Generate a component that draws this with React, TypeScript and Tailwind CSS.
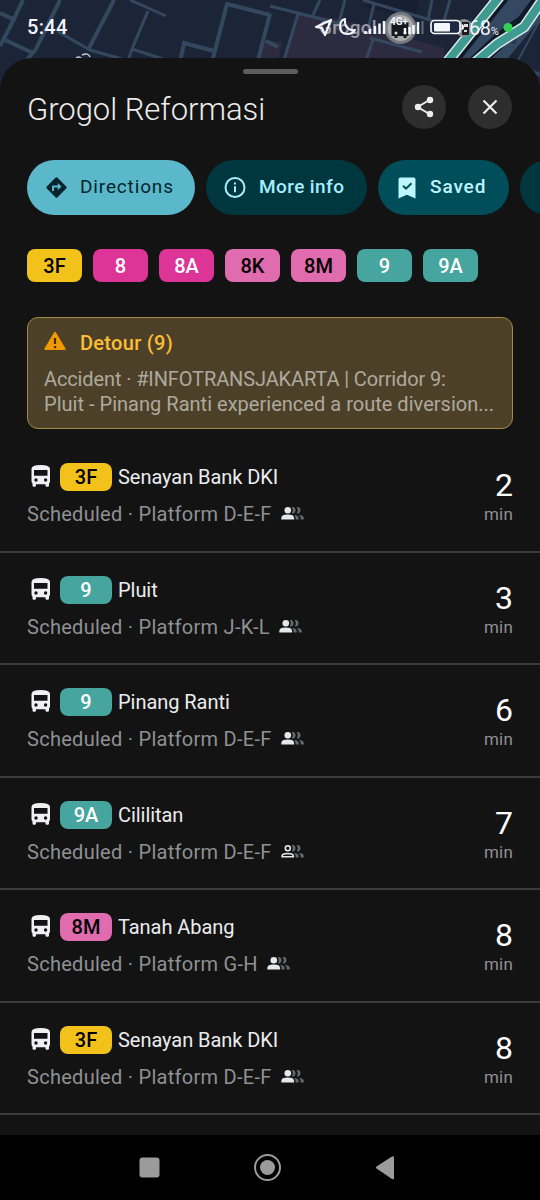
import type { ReactNode } from 'react'

type Route = { name: string; color: string }

const yellow = 'bg-[#f2c21a] text-black'
const magenta = 'bg-[#dd3497] text-white'
const pink = 'bg-[#e06bae] text-black'
const teal = 'bg-[#46a59e] text-white'

const routes: Route[] = [
  { name: '3F', color: yellow },
  { name: '8', color: magenta },
  { name: '8A', color: magenta },
  { name: '8K', color: pink },
  { name: '8M', color: pink },
  { name: '9', color: teal },
  { name: '9A', color: teal },
]

const departures = [
  { route: '3F', color: yellow, to: 'Senayan Bank DKI', platform: 'D-E-F', min: 2, busy: true },
  { route: '9', color: teal, to: 'Pluit', platform: 'J-K-L', min: 3, busy: true },
  { route: '9', color: teal, to: 'Pinang Ranti', platform: 'D-E-F', min: 6, busy: true },
  { route: '9A', color: teal, to: 'Cililitan', platform: 'D-E-F', min: 7, busy: false },
  { route: '8M', color: pink, to: 'Tanah Abang', platform: 'G-H', min: 8, busy: true },
  { route: '3F', color: yellow, to: 'Senayan Bank DKI', platform: 'D-E-F', min: 8, busy: true },
]

function MapBackground() {
  return (
    <svg className="absolute left-0 top-0" width="540" height="100" viewBox="0 0 540 100" fill="none">
      <rect width="540" height="100" fill="#1b2537" />
      <path d="M298 13l42 6 104 29v20H282z M262 40l20 2-4 20h-20z" fill="#2d2b40" />
      <path d="M374 0l46 0-6 20-50-14z" fill="#172033" />
      <path d="M500 0h40v20l-42 50h-54z" fill="#354861" />
      <path d="M540 30v70h-18l-8-30z" fill="#1b2537" />
      <g stroke="#33485f" strokeWidth="3">
        <path d="M0 13l13 6M23 0L11 25 0 46M5 40l28 13M60 0L36 49l-10 12M114 0L88 50" strokeWidth="4" />
        <path d="M57 31l33 19 32 9M130 0l36 16M148 11l-16 38-4 12M132 49l34 11" />
        <path d="M180 62l4-19 30 8M212 62l15-58 43 11M266 41l12 6M270 14l-12 46" strokeWidth="4" />
        <path d="M298 14l-14 46M270 6l75 19M320 0l-7 15M345 0l-8 30M374 4l-6 25M363 0l84 25 22 10M432 0l-4 20M370 38l52 14M366 60l7-20M450 0l-7 24 30 16" />
        <path d="M540 20l-24 44M530 68l10 8M520 82l20-10" strokeWidth="2" />
      </g>
      <path d="M470 22l46 20M450 60l24 8" stroke="#29384e" strokeWidth="5" />
      <path d="M502-4l-56 70M542-2l-18 24-24 18-32 30" stroke="#101a2a" strokeWidth="15" />
      <path d="M500-4l-56 70M544-2l-20 29-27 17-34 29" stroke="#dcebe9" strokeWidth="11" />
      <path d="M500-4l-56 70M544-2l-20 29-27 17-34 29" stroke="#3f9b91" strokeWidth="8" />
      <path d="M76 58c3-2 5-1 6 2M82 55c4-2 7-1 8 2" stroke="#c7cbd1" strokeWidth="1.5" />
    </svg>
  )
}

function StatusBar() {
  return (
    <div className="relative flex h-[58px] items-start justify-between px-[27px] pt-[15px] text-[#f1f4fb]">
      <span className="text-[20px] leading-[25px] font-medium tracking-[0.3px]">5:44</span>
      <div className="relative -mr-[23px] flex h-[25px] w-[226px]">
        {/* station label of the map, showing through under the system icons */}
        <span className="absolute left-[9px] top-[2px] text-[19px] leading-[22px] font-medium tracking-[0.2px] text-[#989ca7]">Grogol</span>
        <svg className="absolute left-0 -top-[6px]" width="204" height="40" viewBox="310 9 204 40" fill="none">
          <circle cx="400.500" cy="28" r="16" fill="#777a80" />
          <circle cx="400.500" cy="28" r="13" fill="#a9abad" />
          <path d="M391.500 22h17v14h-2v2h-3v-2h-6v2h-3v-2h-3z" fill="#161a20" />
          <circle cx="396" cy="33" r="1.500" fill="#ddd" />
          <circle cx="405" cy="33" r="1.500" fill="#ddd" />
          <circle cx="464" cy="28" r="9" fill="#898b8f" />
          <path d="M462 22h7v13h-7z" fill="#1b1b20" />
          <path d="M464 24h4v3h-4zM464 30h3v2h-3z" fill="#ddd" />
          <path d="M316 27l15-7-6 15-3-7z" stroke="#f4f6fc" strokeWidth="2.200" strokeLinejoin="round" />
          <path d="M345 19c-7 1-7 15 2 15 4 0 7-2 8-4-6 1-11-3-10-11z" stroke="#f4f6fc" strokeWidth="2" strokeLinejoin="round" />
          <path d="M365.500 34v-3M370 34v-5M375 34v-8M379.500 34V23.500M384 34V21" stroke="#f4f6fc" strokeWidth="2.500" />
          <path d="M405 34v-6M409.500 34v-7M413.500 34v-9M418 34V22" stroke="#f4f6fc" strokeWidth="2.500" />
          <path d="M422.500 34V21" stroke="#626b7b" strokeWidth="2" />
          <rect x="431" y="20.500" width="29" height="13" rx="3.500" fill="#1d2940" stroke="#f4f6fc" strokeWidth="1.700" />
          <rect x="434" y="23" width="16" height="8.500" rx="1" fill="#f4f6fc" />
          <path d="M462 24.500q2 2.500 0 5" stroke="#f4f6fc" strokeWidth="2" />
          <circle cx="508" cy="27.500" r="4.500" fill="#31d158" />
        </svg>
        <span className="absolute left-[80px] top-[1px] text-[10px] leading-[12px] font-bold">4G+</span>
        <span className="absolute left-[159px] top-[2px] whitespace-nowrap text-[20px] leading-[22px] tracking-[-0.4px]">
          68<span className="text-[11px]">%</span>
        </span>
      </div>
    </div>
  )
}

function RoundButton({ children }: { children: ReactNode }) {
  return <button className="flex size-11 items-center justify-center rounded-full bg-[#2e2e2e] text-[#ededed]">{children}</button>
}

function BusIcon() {
  return (
    <svg width="20" height="24" viewBox="0 0 20 24" className="-mt-[2px] ml-[4px] shrink-0">
      <path
        fill="#f0f0f3"
        fillRule="evenodd"
        d="M0.500 5Q0.500 1 9.700 1T19 5V17.200q0 1.300-1 2.200v2q0 1.400-1.400 1.400h-.7q-1.400 0-1.400-1.400v-1.200H5v1.200q0 1.400-1.400 1.400h-.7q-1.400 0-1.400-1.400v-2q-1-.9-1-2.200zM3 6v5.800h13.500V6zM5 14.300a1.700 1.700 0 100 3.400 1.700 1.700 0 000-3.400zm9.600 0a1.700 1.700 0 100 3.400 1.700 1.700 0 000-3.400z"
      />
    </svg>
  )
}

function CrowdIcon({ busy }: { busy: boolean }) {
  return (
    <svg width="23" height="15" viewBox="0 0 23 15" fill="none" className="-mt-[2px]">
      <circle cx="6.800" cy="4.300" r={busy ? 3.300 : 2.500} fill={busy ? '#e6e7ea' : 'none'} stroke={busy ? 'none' : '#e6e7ea'} strokeWidth="1.600" />
      <path
        d={busy ? 'M.3 13.500V12Q.3 8.600 6.700 8.600T13.100 12v1.500z' : 'M1.100 12.700v-.8Q1.100 9.500 6.700 9.500t5.600 2.400v.8z'}
        fill={busy ? '#e6e7ea' : 'none'}
        stroke={busy ? 'none' : '#e6e7ea'}
        strokeWidth="1.600"
      />
      <path
        fill="#686b6e"
        d="M10.700 1.200q3.400-.8 3.800 3.100-.4 3.900-3.800 3.100 2.200-3.100 0-6.200zM15.700 1.200q3.400-.8 3.800 3.100-.4 3.900-3.800 3.100 2.200-3.100 0-6.200zM13 8.700q4.600.7 4.600 3.300v1.500h-3V12q0-2-1.600-3.300zM17.700 8.700q5 .7 5 3.300v1.500h-3V12q0-2-2-3.300z"
      />
    </svg>
  )
}

function Actions() {
  return (
    <div className="mt-[31px] flex h-[55px] gap-[11px] overflow-hidden pl-[27px] text-[19px] font-medium">
      <button className="flex w-[168px] shrink-0 items-center rounded-full bg-[#5ab8ca] pl-[18px] text-[#04252e]">
        <svg width="23" height="23" viewBox="0 0 23 23" fill="none">
          <rect x="3.900" y="3.900" width="15.200" height="15.200" rx="1.500" transform="rotate(45 11.500 11.500)" fill="#04252e" />
          <path d="M8 15v-4.500h6.500" stroke="#5ab8ca" strokeWidth="1.900" />
          <path d="M12.800 7l3.700 3.500-3.700 3.500z" fill="#5ab8ca" />
        </svg>
        <span className="ml-[12px] font-normal tracking-[0.85px]">Directions</span>
      </button>
      <button className="flex w-[161px] shrink-0 items-center rounded-full bg-[#00363e] pl-[18px] text-[#a6eeff]">
        <svg width="23" height="23" viewBox="0 0 23 23" fill="none" stroke="currentColor" strokeWidth="2">
          <circle cx="11" cy="11.500" r="9.500" />
          <path d="M11 10.300v6M11 6.600v2" />
        </svg>
        <span className="ml-[12px] tracking-[0.4px]">More info</span>
      </button>
      <button className="flex w-[131px] shrink-0 items-center rounded-full bg-[#004e59] pl-[20px] text-[#bff5ff]">
        <svg width="18" height="22" viewBox="0 0 18 22" fill="none">
          <path d="M2.500.5h13q2 0 2 2V21.500l-8.700-3.700L.5 21.500V2.500q0-2 2-2z" fill="currentColor" />
          <path d="M5 8.700l3 3 5.500-5.500" stroke="#004e59" strokeWidth="2" />
        </svg>
        <span className="ml-[14px] tracking-[0.9px]">Saved</span>
      </button>
      <div className="w-[131px] shrink-0 rounded-full bg-[#00363e]" />
    </div>
  )
}

function DetourAlert() {
  return (
    <div className="mx-[27px] mt-[35px] h-[112px] rounded-[11px] border-[1.500px] border-[#a28a43] bg-[#4c4128] px-[16px] pt-[12px]">
      <div className="flex items-center gap-[14px]">
        <svg width="22" height="20" viewBox="0 0 22 20" className="-mt-[5px]">
          <path d="M10 1.500q1-1.500 2 0l9.500 16q.7 1.500-1 1.500h-19q-1.700 0-1-1.500z" fill="#f29900" />
          <path d="M11 7v6M11 15v2.200" stroke="#3b301e" strokeWidth="2.200" />
        </svg>
        <span className="text-[20px] leading-[26px] font-medium tracking-[0.3px] text-[#fdbd34]">Detour (9)</span>
      </div>
      <p className="mt-[11px] whitespace-nowrap text-[20px] leading-[24.500px] text-[#aea99e]">
        <span className="tracking-[-0.12px]">Accident · #INFOTRANSJAKARTA | Corridor 9:</span>
        <br />
        <span className="tracking-[0.02px]">Pluit - Pinang Ranti experienced a route diversion...</span>
      </p>
    </div>
  )
}

export default function App() {
  return (
    <div className="relative flex h-[1200px] w-[540px] flex-col overflow-hidden bg-black font-['Roboto',sans-serif]">
      <MapBackground />
      <StatusBar />

      <main className="relative h-[1077px] overflow-hidden rounded-t-[32px] bg-[#131313]">
        <div className="mx-auto mt-[11px] h-[5px] w-[55px] rounded-full bg-[#5d5d5d]" />

        <header className="mt-[11px] flex h-[44px] items-center pr-[28px] pl-[27px]">
          <h1 className="flex-1 pt-[6px] text-[31px] leading-[40px] font-[350] tracking-[-0.02px] text-[#ececec]">Grogol Reformasi</h1>
          <div className="flex gap-[22px]">
            <RoundButton>
              <svg width="22" height="22" viewBox="0 0 22 22" fill="currentColor">
                <path d="M16.500 4L4.500 11l12 7" fill="none" stroke="currentColor" strokeWidth="1.900" />
                <circle cx="17" cy="4" r="3.200" />
                <circle cx="5" cy="11" r="3.200" />
                <circle cx="17" cy="18" r="3.200" />
              </svg>
            </RoundButton>
            <RoundButton>
              <svg width="16" height="16" viewBox="0 0 16 16" stroke="currentColor" strokeWidth="2.200">
                <path d="M1.500 1.500l13 13M14.500 1.500l-13 13" />
              </svg>
            </RoundButton>
          </div>
        </header>

        <Actions />

        <div className="mt-[34px] flex gap-[11px] pl-[27px]">
          {routes.map((r) => (
            <span key={r.name} className={`flex h-[33px] w-[55px] items-center justify-center rounded-[8px] text-[20px] font-medium ${r.color}`}>
              {r.name}
            </span>
          ))}
        </div>

        <DetourAlert />

        <ul className="mt-[11px]">
          {departures.map((d, i) => (
            <li key={i} className="flex h-[112.500px] justify-between border-b-2 border-[#3a3b3c] px-[27px]">
              <div className="pt-[23px]">
                <div className="flex h-[28px] items-center">
                  <BusIcon />
                  <span className={`ml-[9px] flex h-[28px] w-[52px] items-center justify-center rounded-[8px] text-[20px] font-medium ${d.color}`}>
                    {d.route}
                  </span>
                  <span className="ml-[6px] text-[20px] tracking-[-0.05px] text-[#ececef]">{d.to}</span>
                </div>
                <div className="mt-[11px] flex items-center gap-[9px] text-[20px] leading-[25px] text-[#8f9194]">
                  <span className="tracking-[0.28px]">Scheduled · Platform {d.platform}</span>
                  <CrowdIcon busy={d.busy} />
                </div>
              </div>
              <div className="flex flex-col items-end pt-[27px]">
                <span className="text-[32px] leading-[36px] text-white">{d.min}</span>
                <span className="mt-px text-[17px] leading-[20px] tracking-[0.2px] text-[#8f9194]">min</span>
              </div>
            </li>
          ))}
        </ul>
      </main>

      <nav className="h-[65px] bg-black">
        <svg width="540" height="65" viewBox="0 0 540 65" fill="#9b9b9b">
          <rect x="139.500" y="22.500" width="20" height="20" rx="3" />
          <circle cx="267.500" cy="32.500" r="12.500" fill="none" stroke="#9b9b9b" strokeWidth="2" />
          <circle cx="267.500" cy="32.500" r="7.500" />
          <path d="M392 21.500q2-1 2 1v20.500q0 2-2 1l-15.500-10.500q-1.500-1 0-2z" />
        </svg>
      </nav>
    </div>
  )
}
